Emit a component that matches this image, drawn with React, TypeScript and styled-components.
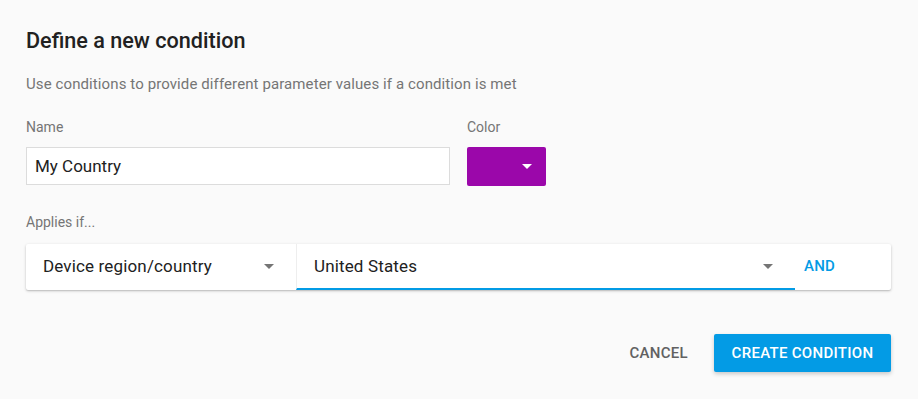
import React from "react";
import styled, { createGlobalStyle } from "styled-components";

const Global = createGlobalStyle`
  html, body { margin: 0; padding: 0; background: #fafafa; }
  body { font-family: Roboto, "Liberation Sans", Arial, sans-serif; -webkit-font-smoothing: antialiased; }
  * { box-sizing: border-box; }
`;

const Dialog = styled.div`
  width: 918px;
  height: 399px;
  background: #fafafa;
  padding: 24px 27px 0 26px;
  display: flex;
  flex-direction: column;
`;

const Title = styled.h2`
  margin: 0;
  font-size: 21.6px;
  line-height: 34px;
  font-weight: 500;
  color: #212121;
`;

const Subtitle = styled.p`
  margin: 16px 0 0;
  font-size: 15px;
  line-height: 20px;
  letter-spacing: 0.1px;
  color: #757575;
`;

const FieldRow = styled.div`
  display: flex;
  gap: 17px;
  margin-top: 24px;
`;

const Field = styled.div<{ $width: number }>`
  display: flex;
  flex-direction: column;
  width: ${(p) => p.$width}px;
`;

const Label = styled.div<{ $gap?: number }>`
  font-size: 14px;
  line-height: 18px;
  color: #757575;
  margin-bottom: ${(p) => p.$gap ?? 11}px;
`;

const TextInput = styled.div`
  height: 38px;
  background: #fff;
  border: 1px solid #dcdcdc;
  padding: 0 8px;
  display: flex;
  align-items: center;
  font-size: 17px;
  color: #212121;
`;

const Swatch = styled.div<{ $color: string }>`
  height: 39px;
  width: 79px;
  background: ${(p) => p.$color};
  border-radius: 2px;
  display: flex;
  align-items: center;
  justify-content: flex-end;
  padding-right: 14px;
`;

const Caret = styled.span<{ $color: string }>`
  width: 0;
  height: 0;
  border-left: 5px solid transparent;
  border-right: 5px solid transparent;
  border-top: 5px solid ${(p) => p.$color};
  flex: none;
`;

const Section = styled.div`
  margin-top: 27px;
  display: flex;
  flex-direction: column;
`;

const ConditionCard = styled.div`
  display: flex;
  height: 46px;
  background: #fff;
  box-shadow: 0 1px 3px rgba(0, 0, 0, 0.22), 0 1px 1px rgba(0, 0, 0, 0.08);
  border-radius: 2px;
`;

const Select = styled.div<{ $width: number; $pl: number; $pr: number; $active?: boolean; $divider?: boolean }>`
  width: ${(p) => p.$width}px;
  display: flex;
  align-items: center;
  justify-content: space-between;
  padding: 0 ${(p) => p.$pr}px 0 ${(p) => p.$pl}px;
  font-size: 17px;
  letter-spacing: 0.15px;
  color: #212121;
  border-bottom: 2px solid ${(p) => (p.$active ? "#039be5" : "transparent")};
  border-left: ${(p) => (p.$divider ? "1px solid #eeeeee" : "none")};
`;

const AndButton = styled.div`
  flex: 1;
  display: flex;
  align-items: center;
  padding-left: 9px;
  padding-bottom: 2px;
  font-size: 15px;
  font-weight: 500;
  color: #039be5;
  letter-spacing: 0.2px;
`;

const Actions = styled.div`
  margin-top: 44px;
  display: flex;
  justify-content: flex-end;
  align-items: center;
  gap: 26px;
`;

const FlatButton = styled.div`
  font-size: 15px;
  font-weight: 500;
  color: #616161;
  letter-spacing: 0.3px;
`;

const RaisedButton = styled.div`
  height: 38px;
  width: 177px;
  background: #039be5;
  color: #fff;
  font-size: 15px;
  font-weight: 500;
  letter-spacing: 0.3px;
  border-radius: 2px;
  display: flex;
  align-items: center;
  justify-content: center;
  box-shadow: 0 2px 4px rgba(0, 0, 0, 0.2);
`;

export default function App() {
  return (
    <>
      <Global />
      <Dialog>
        <Title>Define a new condition</Title>
        <Subtitle>Use conditions to provide different parameter values if a condition is met</Subtitle>
        <FieldRow>
          <Field $width={424}>
            <Label>Name</Label>
            <TextInput>My Country</TextInput>
          </Field>
          <Field $width={79}>
            <Label>Color</Label>
            <Swatch $color="#9b07aa">
              <Caret $color="#ffffff" />
            </Swatch>
          </Field>
        </FieldRow>
        <Section>
          <Label $gap={13}>Applies if...</Label>
          <ConditionCard>
            <Select $width={270} $pl={17} $pr={22}>
              <span>Device region/country</span>
              <Caret $color="#757575" />
            </Select>
            <Select $width={499} $pl={17} $pr={22} $active $divider>
              <span>United States</span>
              <Caret $color="#757575" />
            </Select>
            <AndButton>AND</AndButton>
          </ConditionCard>
        </Section>
        <Actions>
          <FlatButton>CANCEL</FlatButton>
          <RaisedButton>CREATE CONDITION</RaisedButton>
        </Actions>
      </Dialog>
    </>
  );
}
